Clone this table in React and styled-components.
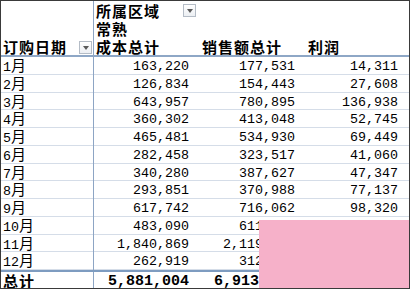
import styled, { createGlobalStyle } from 'styled-components';

const Global = createGlobalStyle`
  body { margin: 0; background: #fff; }
`;

const rows = [
  ['1', '163,220', '177,531', '14,311'],
  ['2', '126,834', '154,443', '27,608'],
  ['3', '643,957', '780,895', '136,938'],
  ['4', '360,302', '413,048', '52,745'],
  ['5', '465,481', '534,930', '69,449'],
  ['6', '282,458', '323,517', '41,060'],
  ['7', '340,280', '387,627', '47,347'],
  ['8', '293,851', '370,988', '77,137'],
  ['9', '617,742', '716,062', '98,320'],
  ['10', '483,090', '611,250', '128,160'],
  ['11', '1,840,869', '2,119,337', '278,468'],
  ['12', '262,919', '312,548', '49,629'],
];

const Sheet = styled.div`
  position: relative;
  width: 410px;
  height: 289px;
  box-sizing: border-box;
  border: 1px solid #3a3a3a;
  overflow: hidden;
  background: #fff;
  color: #000;
`;

const Row = styled.div`
  display: grid;
  grid-template-columns: 93px 106px 106px 1fr;
  box-sizing: border-box;
  height: ${p => p.$h};
  border-bottom: ${p => p.$line || 'none'};
  border-top: ${p => p.$top || 'none'};
`;

const Cell = styled.div`
  display: flex;
  align-items: ${p => (p.$head ? 'flex-end' : 'center')};
  justify-content: ${p => (p.$num ? 'flex-end' : 'space-between')};
  padding: ${p => (p.$num ? '1px 11px 0 0' : '0 1px 0 2px')};
  box-sizing: border-box;
  min-width: 0;
  white-space: nowrap;
  border-right: ${p => (p.$divider ? '1px solid #8da5c4' : 'none')};
`;

const Han = styled.span`
  font-family: "Noto Sans CJK SC", "Noto Sans", sans-serif;
  font-size: 15px;
  letter-spacing: 1px;
  line-height: 16px;
  font-weight: ${p => (p.$bold ? 700 : 400)};
`;

const Num = styled.span`
  font-family: "Liberation Mono", monospace;
  font-size: ${p => (p.$bold ? '15px' : '13.33px')};
  font-weight: ${p => (p.$bold ? 700 : 400)};
  line-height: 15px;
`;

const Drop = styled.span`
  flex: none;
  width: 13px;
  height: 13px;
  box-sizing: border-box;
  margin: 0 ${p => p.$mr || 0} ${p => p.$mb || 0} 0;
  border: 1px solid #b4bcc6;
  background: linear-gradient(#ffffff, #eceff3);
  display: flex;
  align-items: center;
  justify-content: center;
  &::after {
    content: '';
    border-left: 3.5px solid transparent;
    border-right: 3.5px solid transparent;
    border-top: 4px solid #5a5a5a;
  }
`;

const Cover = styled.div`
  position: absolute;
  left: 258px;
  top: 219px;
  right: -1px;
  bottom: -1px;
  background: #f6b1c9;
`;

const Month = ({ n }) => (
  <span>
    <Num>{n}</Num>
    <Han>月</Han>
  </span>
);

export default function App() {
  return (
    <>
      <Global />
      <Sheet>
        <Row $h="18px">
          <Cell $divider />
          <Cell $head>
            <Han $bold>所属区域</Han>
            <Drop $mr="3px" $mb="2px" />
          </Cell>
          <Cell />
          <Cell />
        </Row>
        <Row $h="18px">
          <Cell $divider />
          <Cell $head>
            <Han $bold>常熟</Han>
          </Cell>
          <Cell />
          <Cell />
        </Row>
        <Row $h="20px" $line="2px solid #8ea7c6">
          <Cell $head $divider>
            <Han $bold>订购日期</Han>
            <Drop $mb="1px" />
          </Cell>
          <Cell $head>
            <Han $bold>成本总计</Han>
          </Cell>
          <Cell $head>
            <Han $bold>销售额总计</Han>
          </Cell>
          <Cell $head>
            <Han $bold>利润</Han>
          </Cell>
        </Row>
        {rows.map(([m, cost, sales, profit]) => (
          <Row key={m} $h="17.75px" $line="1px solid #d5dde8">
            <Cell $divider>
              <Month n={m} />
            </Cell>
            <Cell $num>
              <Num>{cost}</Num>
            </Cell>
            <Cell $num>
              <Num>{sales}</Num>
            </Cell>
            <Cell $num>
              <Num>{profit}</Num>
            </Cell>
          </Row>
        ))}
        <Row $h="20px" $top="2px solid #7e9cc0">
          <Cell $divider>
            <Han $bold>总计</Han>
          </Cell>
          <Cell $num>
            <Num $bold>5,881,004</Num>
          </Cell>
          <Cell $num>
            <Num $bold>6,913,482</Num>
          </Cell>
          <Cell $num>
            <Num $bold>1,032,478</Num>
          </Cell>
        </Row>
        <Cover />
      </Sheet>
    </>
  );
}
